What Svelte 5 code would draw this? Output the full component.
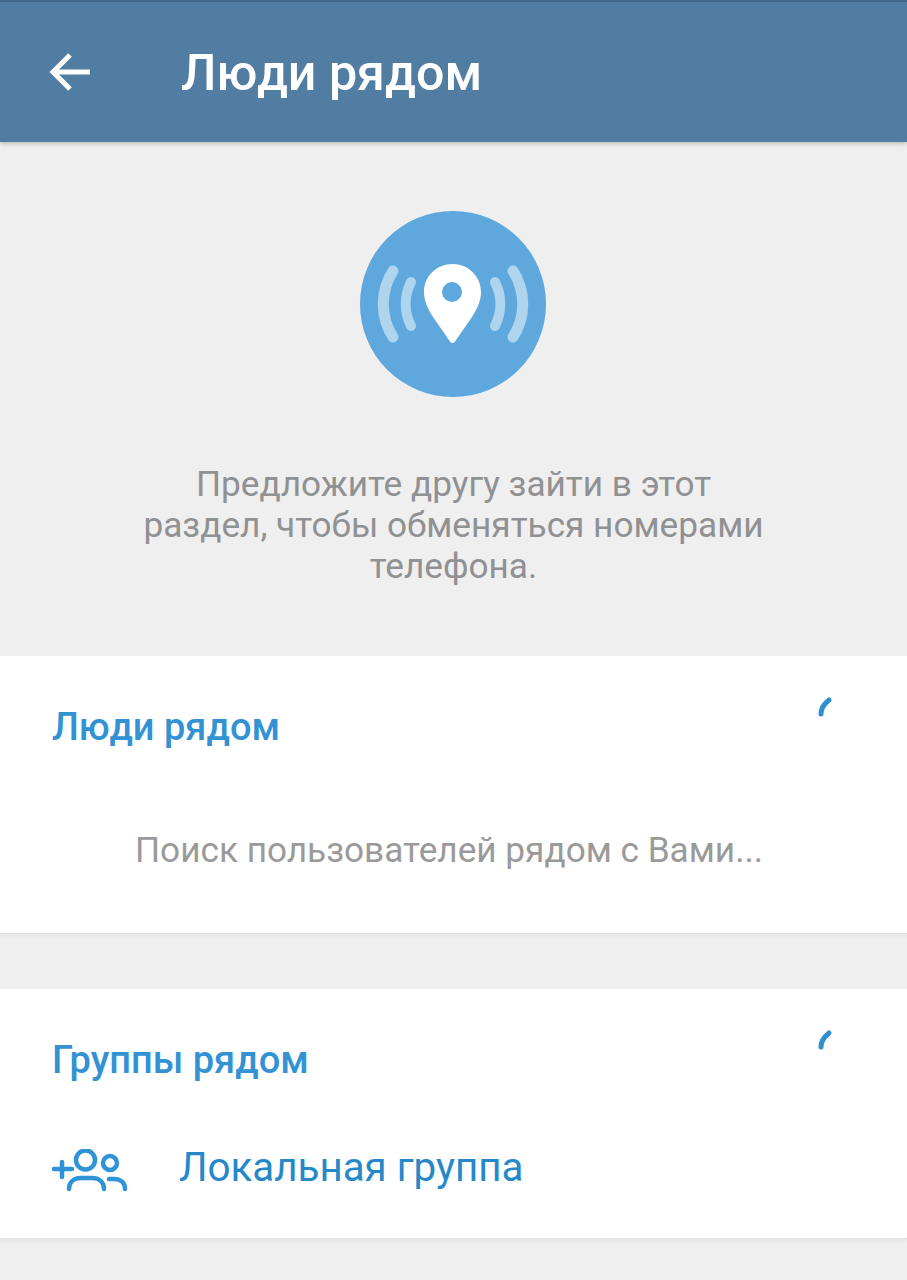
<script>
    const sections = { nearby: 'Люди рядом', groups: 'Группы рядом' };
</script>

<div class="screen">
    <header class="bar">
        <svg class="back" width="44" height="44" viewBox="0 0 44 44" fill="none" stroke="#fff" stroke-width="5">
            <path d="M42 22H6M22 5 5 22l17 17" />
        </svg>
        <h1>Люди рядом</h1>
    </header>

    <section class="hero">
        <svg class="pin" width="186" height="186" viewBox="0 0 186 186">
            <circle cx="93" cy="93" r="93" fill="#5fa8dd" />
            <g fill="none" stroke="#fff" stroke-linecap="round" stroke-opacity=".5">
                <path stroke-width="11" d="M33 60C20 80 20 106 33 126" />
                <path stroke-width="10" d="M51 71C44 85 44 101 51 115" />
                <path stroke-width="10" d="M135 71C142 85 142 101 135 115" />
                <path stroke-width="11" d="M153 60C166 80 166 106 153 126" />
            </g>
            <path fill="#fff" d="M92.500 53C76.500 53 64 65.500 64 81c0 9 4 17 9 25l17 24.500c1.300 2 3.700 2 5 0l17-24.500c5-8 9-16 9-25 0-15.500-12.500-28-28.500-28z" />
            <circle cx="92" cy="81" r="10" fill="#5fa8dd" />
        </svg>
        <p>Предложите другу зайти в этот<br />раздел, чтобы обменяться номерами<br />телефона.</p>
    </section>

    <section class="card first">
        <div class="head">
            <h2>{sections.nearby}</h2>
            <svg class="spin" width="18" height="24" viewBox="0 0 18 24" fill="none" stroke="#2f8fcf" stroke-width="5" stroke-linecap="round">
                <path d="M4 19C4 13 7 9 12 5" />
            </svg>
        </div>
        <p class="searching">Поиск пользователей рядом с Вами...</p>
    </section>

    <section class="card second">
        <div class="head">
            <h2>{sections.groups}</h2>
            <svg class="spin" width="18" height="24" viewBox="0 0 18 24" fill="none" stroke="#2f8fcf" stroke-width="5" stroke-linecap="round">
                <path d="M4 19C4 13 7 9 12 5" />
            </svg>
        </div>
        <div class="row">
            <svg width="76" height="46" viewBox="0 0 76 46" fill="none" stroke="#2f93d8" stroke-width="4.500" stroke-linecap="round">
                <path d="M2 20h18M10 13v15" />
                <circle cx="33.500" cy="11" r="9.500" />
                <circle cx="58" cy="14" r="7" />
                <path d="M17 40c0-7 5-11 12-11h11c7 0 12 4 12 11" />
                <path d="M57 30h5c7 0 11 4 11 10" />
            </svg>
            <span>Локальная группа</span>
        </div>
    </section>
</div>

<style>
    :global(body) {
        margin: 0;
    }

    .screen {
        height: 1280px;
        overflow: hidden;
        background: #efefef;
        font-family: Roboto, "Noto Sans", sans-serif;
    }

    .bar {
        height: 142px;
        box-sizing: border-box;
        display: flex;
        align-items: center;
        padding-left: 48px;
        background: #517da2;
        border-top: 2px solid #436a8c;
        box-shadow: 0 2px 4px rgba(0, 0, 0, .2);
    }

    .bar h1 {
        margin: 0 0 0 89px;
        color: #fff;
        font-size: 50.200px;
        font-weight: 500;
    }

    .hero {
        height: 514px;
        box-sizing: border-box;
        padding-top: 69px;
        display: flex;
        flex-direction: column;
        align-items: center;
    }

    .pin {
        display: block;
        margin-right: 1px;
    }

    .hero p {
        margin: 67px 0 0;
        color: #8f9192;
        font-size: 35.200px;
        line-height: 41px;
        text-align: center;
    }

    .card {
        background: #fff;
        border-bottom: 1px solid #e2e2e2;
        box-shadow: 0 2px 4px rgba(0, 0, 0, .05);
        box-sizing: border-box;
        padding: 0 52px;
    }

    .first {
        height: 278px;
    }

    .second {
        height: 250px;
        margin-top: 55px;
    }

    .head {
        display: flex;
        justify-content: space-between;
        padding-right: 20px;
    }

    .head h2 {
        margin: 50px 0 0;
        color: #3392d3;
        font-size: 38px;
        line-height: 42px;
        font-weight: 500;
    }

    .head .spin {
        margin-top: 39px;
    }

    .searching {
        margin: 81px 9px 0 0;
        color: #9a9a9a;
        font-size: 35.200px;
        line-height: 42px;
        text-align: center;
    }

    .row {
        display: flex;
        align-items: center;
        gap: 51px;
        margin-top: 63px;
        color: #2588c9;
        font-size: 40.300px;
    }

    .row span {
        margin-bottom: 8px;
    }
</style>
